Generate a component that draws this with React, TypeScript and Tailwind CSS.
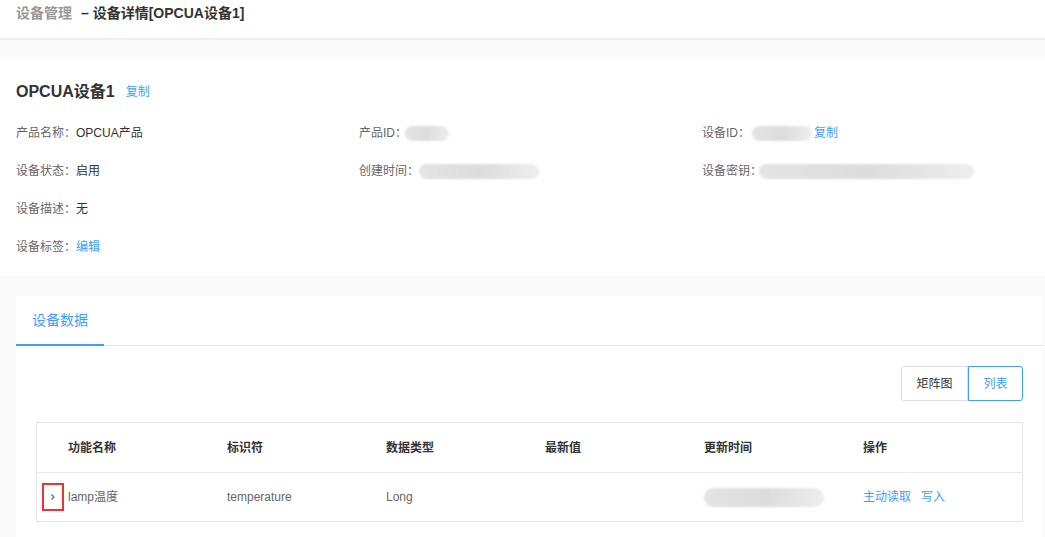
import React from "react";

const Blur = ({ w, h = 15, className = "" }: { w: number; h?: number; className?: string }) => (
  <span
    className={`inline-block rounded-full bg-gradient-to-r from-[#e4e4e4] via-[#dcdcdc] to-[#eeeeee] blur-[1px] align-middle ${className}`}
    style={{ width: w, height: h }}
  />
);

const Info = ({ label, children }: { label: string; children?: React.ReactNode }) => (
  <div className="flex items-center h-[38px] text-[12px]">
    <span className="text-[#666]">{label}：</span>
    <span className="text-[#333] flex items-center">{children}</span>
  </div>
);

export default function App() {
  const cols = ["功能名称", "标识符", "数据类型", "最新值", "更新时间", "操作"];
  return (
    <div
      className="w-[1045px] h-[537px] overflow-hidden bg-[#fafafa]"
      style={{ fontFamily: '"Liberation Sans", "Noto Sans CJK SC", sans-serif' }}
    >
      {/* header */}
      <div className="h-[40px] bg-white border-b-2 border-[#eeeeee] flex items-start pl-4 pt-[4px]">
        <div className="flex items-center h-[18px] text-[14px] font-bold">
          <span className="text-[#999]">设备管理</span>
          <span className="text-[#333] ml-[9px]">– 设备详情[OPCUA设备1]</span>
        </div>
      </div>

      {/* info card */}
      <div className="mt-[20px] bg-white h-[215px] pl-4 pt-[21px]">
        <div className="flex items-center h-[22px]">
          <span className="text-[16px] font-bold text-[#333]">OPCUA设备1</span>
          <span className="ml-[11px] text-[12px] text-[#409eff]">复制</span>
        </div>
        <div className="grid grid-cols-3 mt-[11px]">
          <div>
            <Info label="产品名称">OPCUA产品</Info>
            <Info label="设备状态">启用</Info>
            <Info label="设备描述">无</Info>
            <Info label="设备标签">
              <span className="text-[#409eff]">编辑</span>
            </Info>
          </div>
          <div>
            <Info label="产品ID">
              <Blur w={44} className="ml-[-2px]" />
            </Info>
            <Info label="创建时间">
              <Blur w={120} />
            </Info>
          </div>
          <div>
            <Info label="设备ID">
              <Blur w={60} className="ml-[2px]" />
              <span className="text-[#409eff] ml-[2px]">复制</span>
            </Info>
            <Info label="设备密钥">
              <Blur w={215} className="ml-[-3px]" />
            </Info>
          </div>
        </div>
      </div>

      {/* data card */}
      <div className="mt-[21px] ml-4 mr-[2px] bg-white h-[300px]">
        <div className="h-[50px] border-b border-[#e4e4e4] flex items-end">
          <div className="w-[88px] h-[50px] flex flex-col items-center justify-between">
            <span className="text-[14px] text-[#409eff] mt-[15px]">设备数据</span>
            <span className="block w-full h-[2px] bg-[#409eff] mb-[-1px]" />
          </div>
        </div>
        <div className="px-5 pt-[20px]">
          <div className="flex justify-end">
            <div className="flex h-[35px] text-[12px]">
              <button className="w-[67px] border border-[#dcdfe6] rounded-l-[3px] text-[#333] bg-white">矩阵图</button>
              <button className="w-[55px] border border-[#409eff] rounded-r-[3px] text-[#409eff] bg-white">列表</button>
            </div>
          </div>
          <div className="mt-[21px] border border-[#e4e4e4] text-[12px]">
            <div className="grid grid-cols-[31px_repeat(6,159px)] h-[50px] items-center border-b border-[#e8e8e8]">
              <div />
              {cols.map((c) => (
                <div key={c} className="font-bold text-[#333]">
                  {c}
                </div>
              ))}
            </div>
            <div className="grid grid-cols-[31px_repeat(6,159px)] h-[48px] items-center text-[#666]">
              <div className="flex justify-end">
                <div className="w-[22px] h-[28px] border-2 border-[#ee3333] flex items-center justify-center mr-[4px]">
                  <svg width="8" height="8" viewBox="0 0 8 8">
                    <path d="M2.5 1.5 L5 4 L2.5 6.5" fill="none" stroke="#666" strokeWidth="1.1" />
                  </svg>
                </div>
              </div>
              <div>lamp温度</div>
              <div>temperature</div>
              <div>Long</div>
              <div />
              <div>
                <Blur w={120} h={19} />
              </div>
              <div className="text-[#409eff]">
                <span>主动读取</span>
                <span className="ml-[10px]">写入</span>
              </div>
            </div>
          </div>
        </div>
      </div>
    </div>
  );
}
